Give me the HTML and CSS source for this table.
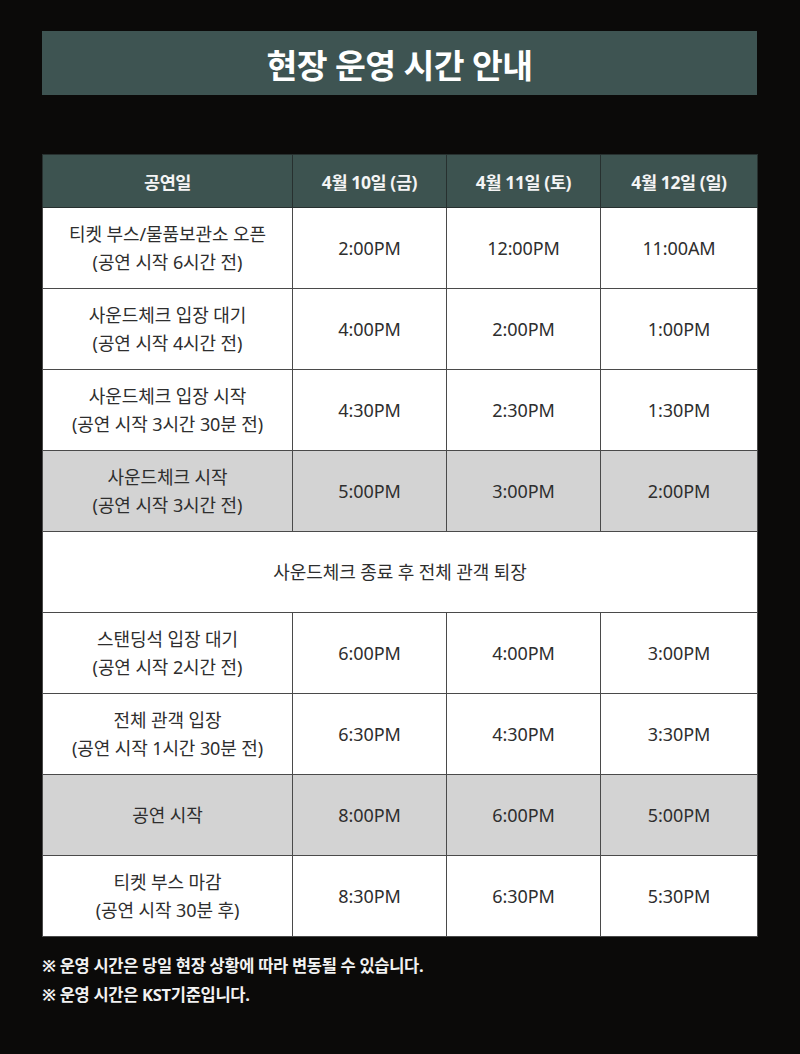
FILE: index.html
```html
<!DOCTYPE html>
<html lang="ko">
<head>
<meta charset="utf-8">
<link rel="stylesheet" href="styles.css">
</head>
<body>
<div class="page">
  <h1 class="title">현장 운영 시간 안내</h1>
  <table class="sched">
    <colgroup>
      <col class="c1"><col class="c2"><col class="c3"><col class="c4">
    </colgroup>
    <thead>
      <tr><th>공연일</th><th>4월 10일 (금)</th><th>4월 11일 (토)</th><th>4월 12일 (일)</th></tr>
    </thead>
    <tbody>
      <tr><td>티켓 부스/물품보관소 오픈<br>(공연 시작 6시간 전)</td><td>2:00PM</td><td>12:00PM</td><td>11:00AM</td></tr>
      <tr><td>사운드체크 입장 대기<br>(공연 시작 4시간 전)</td><td>4:00PM</td><td>2:00PM</td><td>1:00PM</td></tr>
      <tr><td>사운드체크 입장 시작<br>(공연 시작 3시간 30분 전)</td><td>4:30PM</td><td>2:30PM</td><td>1:30PM</td></tr>
      <tr class="gray"><td>사운드체크 시작<br>(공연 시작 3시간 전)</td><td>5:00PM</td><td>3:00PM</td><td>2:00PM</td></tr>
      <tr><td colspan="4">사운드체크 종료 후 전체 관객 퇴장</td></tr>
      <tr><td>스탠딩석 입장 대기<br>(공연 시작 2시간 전)</td><td>6:00PM</td><td>4:00PM</td><td>3:00PM</td></tr>
      <tr><td>전체 관객 입장<br>(공연 시작 1시간 30분 전)</td><td>6:30PM</td><td>4:30PM</td><td>3:30PM</td></tr>
      <tr class="gray"><td>공연 시작</td><td>8:00PM</td><td>6:00PM</td><td>5:00PM</td></tr>
      <tr><td>티켓 부스 마감<br>(공연 시작 30분 후)</td><td>8:30PM</td><td>6:30PM</td><td>5:30PM</td></tr>
    </tbody>
  </table>
  <div class="notes">
    <p>※ 운영 시간은 당일 현장 상황에 따라 변동될 수 있습니다.</p>
    <p>※ 운영 시간은 KST기준입니다.</p>
  </div>
</div>
</body>
</html>
```
FILE: styles.css
```css
html, body {
  margin: 0;
  padding: 0;
  background: #0b0a09;
}
body {
  font-family: "Noto Sans", "Noto Sans CJK KR", sans-serif;
  width: 800px;
  height: 1054px;
  overflow: hidden;
}
.page {
  padding: 31px 0 0 42px;
  width: 715px;
}
.title {
  margin: 0;
  height: 64px;
  background: #3e5452;
  color: #ffffff;
  font-size: 33.5px;
  font-weight: 700;
  letter-spacing: -0.6px;
  display: flex;
  align-items: center;
  justify-content: center;
}
.sched {
  margin-top: 59px;
  width: 715px;
  border-collapse: collapse;
  table-layout: fixed;
}
.c1 { width: 250px; }
.c2 { width: 154px; }
.c3 { width: 154px; }
.c4 { width: 157px; }
.sched th {
  background: #3d5350;
  color: #f4f4f4;
  font-size: 17.5px;
  font-weight: 700;
  height: 52px;
  padding: 0;
  border: 1px solid #27302f;
  letter-spacing: -0.4px;
}
.sched td {
  background: #ffffff;
  color: #2e2e2e;
  font-size: 18px;
  line-height: 28px;
  height: 80px;
  padding: 0;
  text-align: center;
  border: 1px solid #4a4a4a;
  letter-spacing: -0.1px;
}
.sched tr.gray td {
  background: #d3d3d3;
}
.notes {
  margin-top: 14px;
}
.notes p {
  margin: 0;
  color: #f2f2f2;
  font-size: 16.5px;
  font-weight: 700;
  line-height: 29px;
  letter-spacing: -0.3px;
}
```
